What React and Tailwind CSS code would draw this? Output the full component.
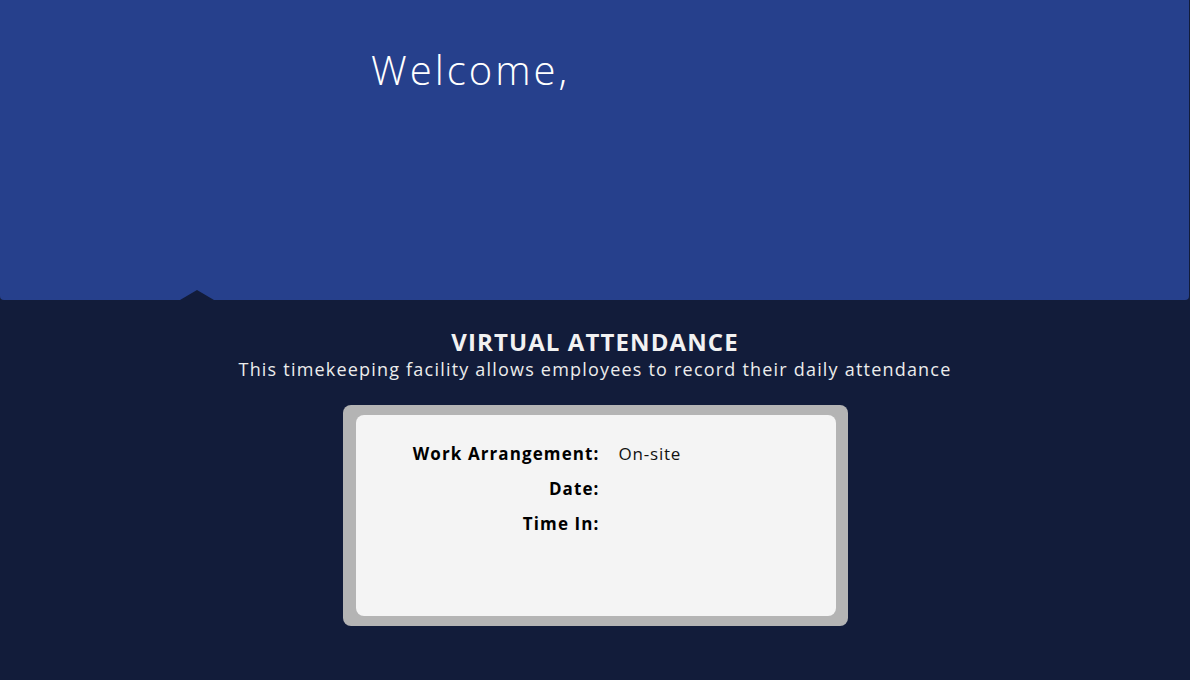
const font = { fontFamily: '"Open Sans", "Noto Sans", sans-serif' };

const Row = ({ label, value }) => (
  <div className="flex items-center h-[35px]">
    <span className="w-[244px] text-right text-[17px] font-bold tracking-[1.1px] text-black">{label}</span>
    <span className="pl-[19px] text-[17px] tracking-[0.8px] text-[#111]">{value}</span>
  </div>
);

export default function App() {
  return (
    <div className="min-h-[680px] w-[1190px] bg-[#121c3a]" style={font}>
      <div className="relative h-[300px] w-[1189px] rounded-b-[4px] bg-[#26408c]">
        <h1 className="pl-[371px] pt-[44px] text-[40px] leading-[52px] font-light tracking-[3px] text-white">
          Welcome,
        </h1>
        <svg className="absolute left-[180px] top-[290px]" width="34" height="10" viewBox="0 0 34 10">
          <polygon points="0,10 17,0 34,10" fill="#121c3a" />
        </svg>
      </div>

      <div className="flex flex-col items-center pt-[27px]">
        <h2 className="text-[24px] leading-[30px] font-bold tracking-[1.1px] text-[#f2f2f2]">VIRTUAL ATTENDANCE</h2>
        <p className="text-[18px] leading-[24px] font-normal tracking-[1.2px] text-[#ececec]">
          This timekeeping facility allows employees to record their daily attendance
        </p>

        <div className="mt-[24px] w-[505px] h-[221px] rounded-[8px] bg-[#b4b4b4] pt-[10px] pb-[10px] pl-[13px] pr-[12px]">
          <div className="h-full rounded-[8px] bg-[#f4f4f4] pt-[21px]">
            <Row label="Work Arrangement:" value="On-site" />
            <Row label="Date:" value="" />
            <Row label="Time In:" value="" />
          </div>
        </div>
      </div>
    </div>
  );
}
